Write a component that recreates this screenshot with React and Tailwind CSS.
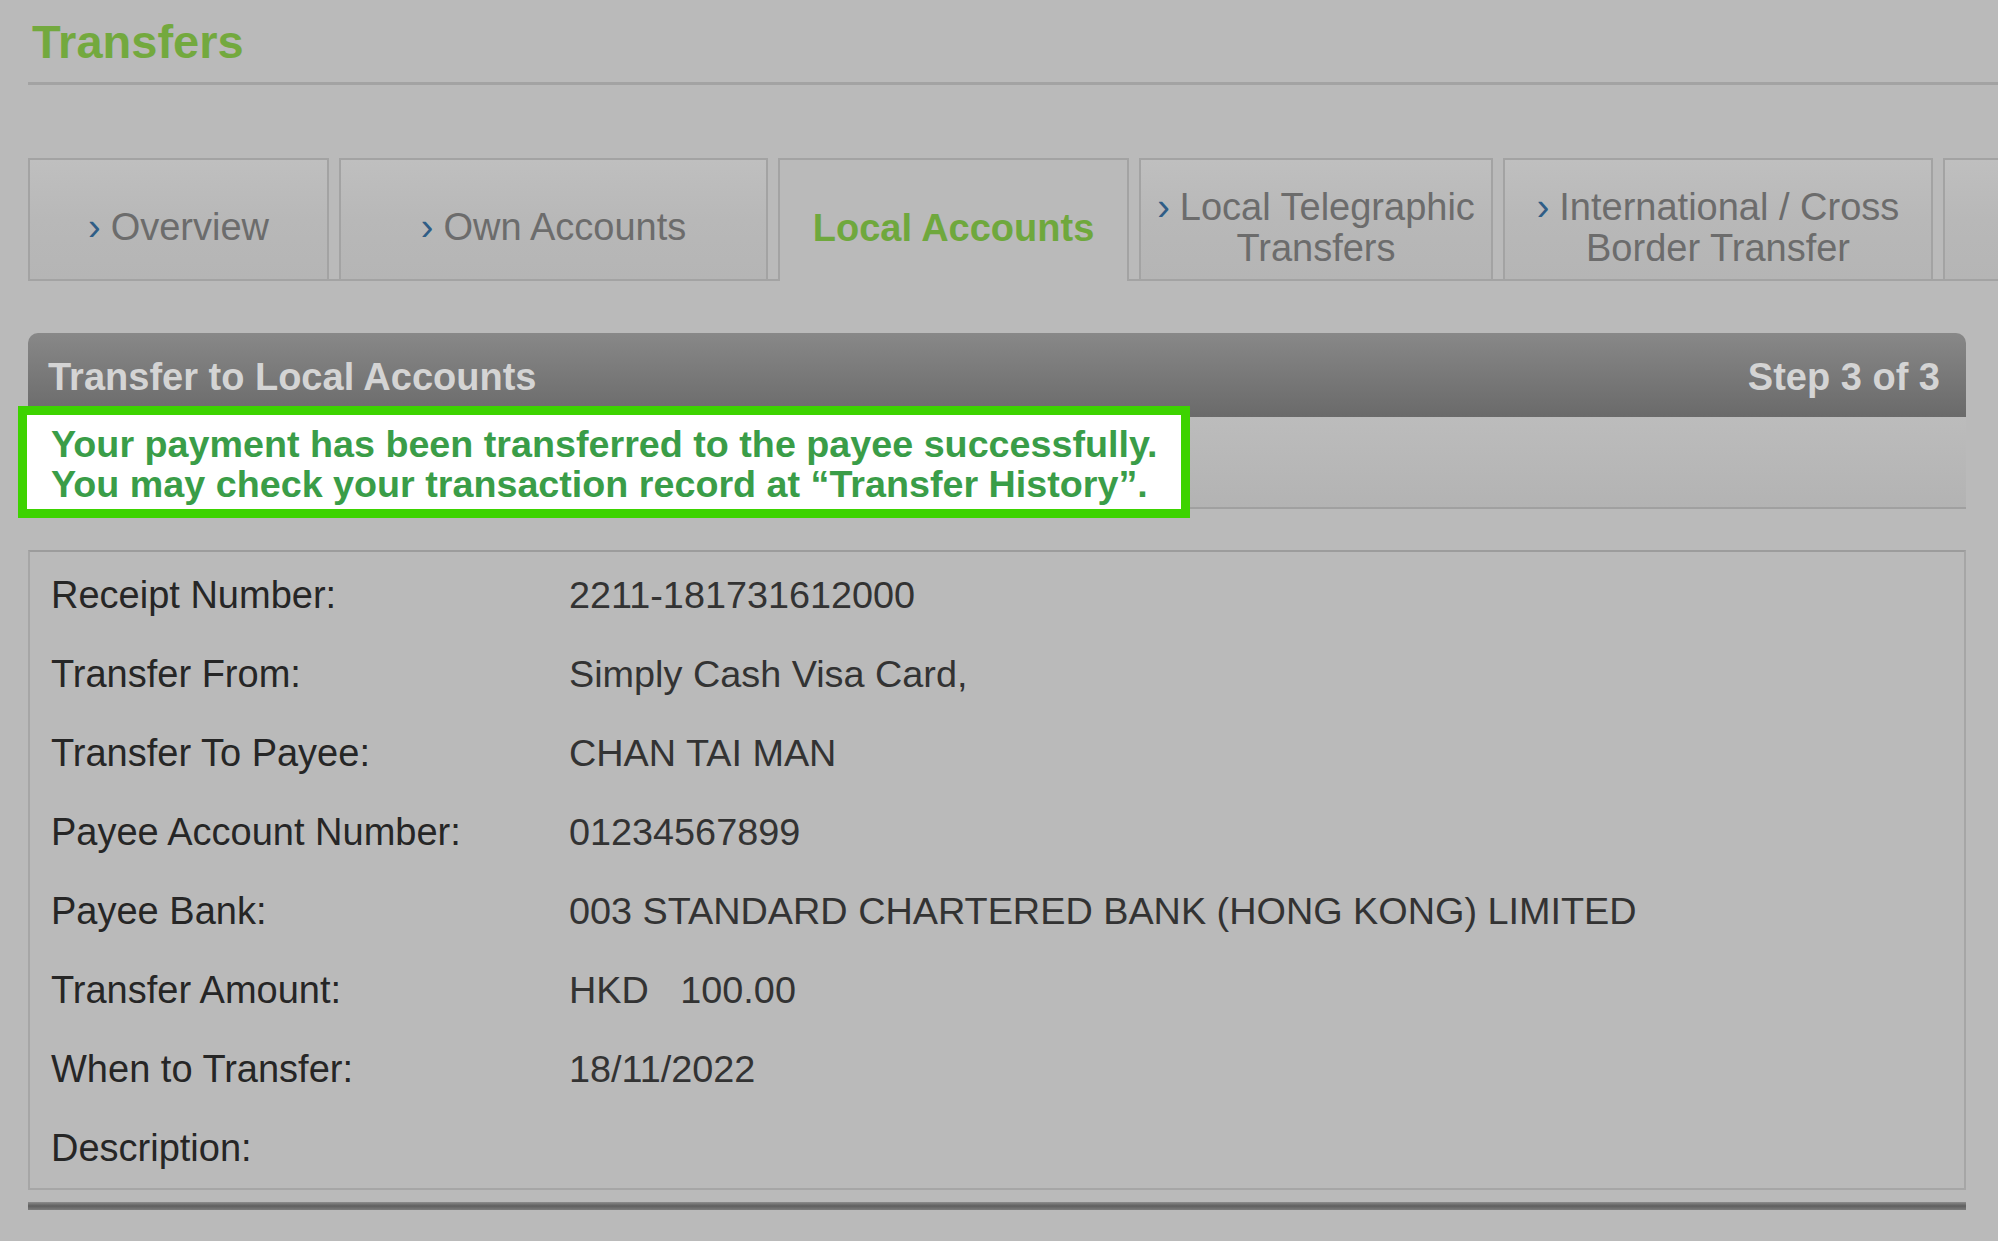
import React from "react";

const tabs = [
  { w: "w-[301px]", lines: ["Overview"] },
  { w: "w-[429px]", lines: ["Own Accounts"] },
  { w: "w-[351px]", lines: ["Local Accounts"], active: true },
  { w: "w-[354px]", lines: ["Local Telegraphic", "Transfers"] },
  { w: "w-[430px]", lines: ["International / Cross", "Border Transfer"] },
  { w: "w-[300px]", lines: [] },
];

const rows = [
  ["Receipt Number:", "2211-181731612000"],
  ["Transfer From:", "Simply Cash Visa Card,"],
  ["Transfer To Payee:", "CHAN TAI MAN"],
  ["Payee Account Number:", "01234567899"],
  ["Payee Bank:", "003 STANDARD CHARTERED BANK (HONG KONG) LIMITED"],
  ["Transfer Amount:", "HKD\u00a0\u00a0\u00a0100.00"],
  ["When to Transfer:", "18/11/2022"],
  ["Description:", ""],
];

function Tab({ tab }) {
  if (tab.active) {
    return (
      <div
        className={`${tab.w} h-[123px] -mb-[2px] shrink-0 flex items-center justify-center pt-[16px] border-2 border-b-0 border-[#a3a3a3] bg-[#bababa]`}
      >
        <span className="text-[38px] leading-[41px] font-bold text-[#6fa83d]">
          {tab.lines[0]}
        </span>
      </div>
    );
  }
  return (
    <div
      className={`${tab.w} h-[121px] shrink-0 flex items-center justify-center pt-[16px] border-2 border-b-0 border-[#a3a3a3] bg-gradient-to-b from-[#bfbfbf] via-[#b8b8b8] to-[#b5b5b5]`}
    >
      <div className="text-center text-[38px] leading-[41px] text-[#6c6c6c]">
        {tab.lines.map((line, i) => (
          <div key={i}>
            {i === 0 ? (
              <span className="mr-[10px] text-[#2f5d86]">›</span>
            ) : null}
            {line}
          </div>
        ))}
      </div>
    </div>
  );
}

export default function App() {
  return (
    <div className="w-[1998px] h-[1241px] overflow-hidden bg-[#bababa] font-['Liberation_Sans',Arial,sans-serif]">
      <div className="pl-[28px]">
        <h1 className="pt-[19px] pl-[4px] text-[47px] leading-[46px] font-bold text-[#73a93e]">
          Transfers
        </h1>
        <div className="mt-[17px] h-[3px] bg-[#a3a3a3]" />

        {/* tab strip */}
        <div className="mt-[73px] w-[1970px] flex gap-[10px] border-b-2 border-[#a3a3a3]">
          {tabs.map((tab, i) => (
            <Tab key={i} tab={tab} />
          ))}
        </div>

        <div className="w-[1938px]">
          <div className="mt-[52px] h-[84px] rounded-t-[10px] bg-gradient-to-b from-[#888888] to-[#6a6a6a] flex items-center justify-between pl-[20px] pr-[26px] pt-[4px]">
            <span className="text-[38px] leading-[41px] font-bold text-[#d4d4d4]">
              Transfer to Local Accounts
            </span>
            <span className="text-[38px] leading-[41px] font-bold text-[#d4d4d4]">
              Step 3 of 3
            </span>
          </div>

          <div className="relative h-[92px] bg-gradient-to-b from-[#bcbcbc] to-[#b3b3b3] border-b-2 border-[#a0a0a0]">
            <div className="absolute -left-[10px] -top-[11px] w-[1172px] h-[112px] border-[9px] border-[#3dd300] bg-white pl-[24px] pt-[9px]">
              <p className="text-[37.7px] leading-[40px] font-bold text-[#3a9d48] whitespace-nowrap">
                Your payment has been transferred to the payee successfully.
              </p>
              <p className="text-[37.7px] leading-[40px] font-bold text-[#3a9d48] whitespace-nowrap">
                You may check your transaction record at “Transfer History”.
              </p>
            </div>
          </div>

          <div className="mt-[41px] border-2 border-[#a6a6a6] border-t-[#9c9c9c] pt-[4px]">
            {rows.map(([label, value]) => (
              <div key={label} className="flex h-[79px] items-center pl-[21px]">
                <div className="w-[518px] text-[38px] leading-[41px] text-[#262626]">
                  {label}
                </div>
                <div className="text-[37.8px] leading-[41px] text-[#333333]">
                  {value}
                </div>
              </div>
            ))}
          </div>

          <div className="mt-[12px] h-[8px] bg-gradient-to-b from-[#8c8c8c] via-[#5f5f5f] to-[#7c7c7c]" />
        </div>
      </div>
    </div>
  );
}
